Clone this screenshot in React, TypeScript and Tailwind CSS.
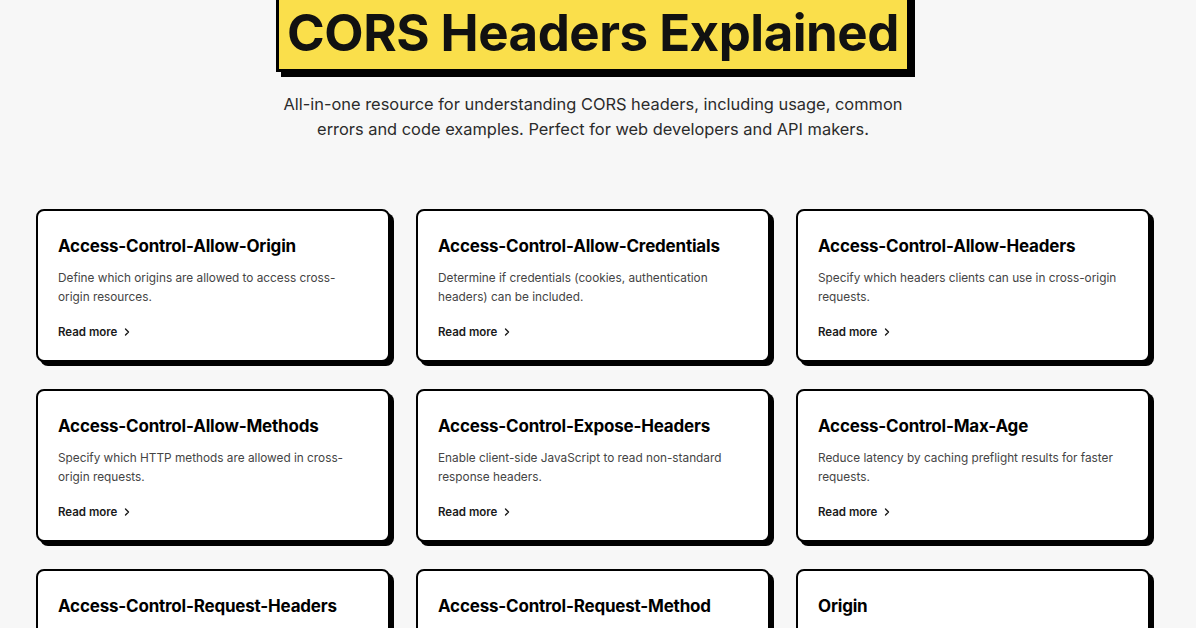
import React from "react";
import { ChevronRight } from "lucide-react";

type Header = { name: string; desc: string };

const headers: Header[] = [
  {
    name: "Access-Control-Allow-Origin",
    desc: "Define which origins are allowed to access cross-origin resources.",
  },
  {
    name: "Access-Control-Allow-Credentials",
    desc: "Determine if credentials (cookies, authentication headers) can be included.",
  },
  {
    name: "Access-Control-Allow-Headers",
    desc: "Specify which headers clients can use in cross-origin requests.",
  },
  {
    name: "Access-Control-Allow-Methods",
    desc: "Specify which HTTP methods are allowed in cross-origin requests.",
  },
  {
    name: "Access-Control-Expose-Headers",
    desc: "Enable client-side JavaScript to read non-standard response headers.",
  },
  {
    name: "Access-Control-Max-Age",
    desc: "Reduce latency by caching preflight results for faster requests.",
  },
  {
    name: "Access-Control-Request-Headers",
    desc: "Tell the server which headers a preflight request will send.",
  },
  {
    name: "Access-Control-Request-Method",
    desc: "Tell the server which method the actual request will use.",
  },
  {
    name: "Origin",
    desc: "Indicates the origin that caused the request to be made.",
  },
];

function HeaderCard({ item }: { item: Header }) {
  return (
    <a
      href="#"
      className="flex h-[153px] flex-col rounded-[8px] border-2 border-black bg-white px-[20px] pt-[23px] shadow-[4px_4px_0_0_#000]"
    >
      <h2 className="text-[17px] leading-[24px] font-bold tracking-[-0.2px] text-black">
        {item.name}
      </h2>
      <p className="mt-[11px] pr-[6px] text-[11.8px] leading-[19px] text-[#444]">
        {item.desc}
      </p>
      <span className="mt-[17px] flex items-center gap-[4px] text-[11.5px] leading-[16px] font-semibold text-[#1a1a1a]">
        Read more
        <ChevronRight size={12} strokeWidth={2.75} />
      </span>
    </a>
  );
}

export default function App() {
  return (
    <div
      className="min-h-screen overflow-hidden bg-[#f7f7f7]"
      style={{ fontFamily: "Inter, 'Noto Sans', sans-serif" }}
    >
      <main className="flex min-h-screen flex-col items-center pr-[10px]">
        <h1 className="mt-[-12px] border-[3px] border-black bg-[#fadf4b] px-[8px] pt-[11px] pb-[5px] text-[51px] leading-[62px] font-bold tracking-[-0.5px] text-[#111] shadow-[5px_5px_0_0_#000]">
          CORS Headers Explained
        </h1>
        <p className="mt-[20px] text-center text-[16.4px] leading-[25px] text-[#2b2b2b]">
          All-in-one resource for understanding CORS headers, including usage, common
          <br />
          errors and code examples. Perfect for web developers and API makers.
        </p>
        <section className="mt-[67px] grid w-[1114px] grid-cols-3 gap-x-[26px] gap-y-[27px]">
          {headers.map((h) => (
            <HeaderCard key={h.name} item={h} />
          ))}
        </section>
      </main>
    </div>
  );
}
